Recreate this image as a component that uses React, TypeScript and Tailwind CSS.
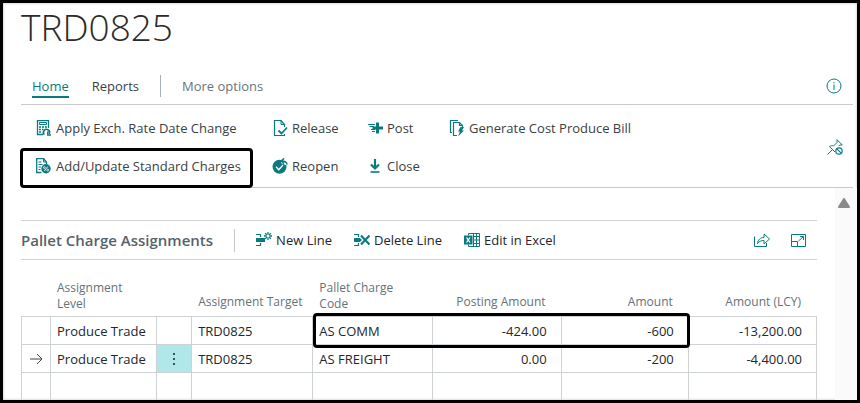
import type { ReactNode } from "react";

const TEAL = "#0b7a80";

function Icon({ children, size = 16 }: { children: ReactNode; size?: number }) {
  return (
    <svg width={size} height={size} viewBox="0 0 16 16" fill="none" stroke={TEAL} strokeWidth="1" className="shrink-0" aria-hidden="true">
      {children}
    </svg>
  );
}

const CalculatorIcon = () => (
  <Icon>
    <path d="M7 14.500H1.500V.5h11V8" strokeWidth="1.300" />
    <path d="M3.500 2.500h7v2h-7z" />
    <path d="M3 7h2M6 7h2M9 7h2M3 9.500h2M6 9.500h1.500M3 12h2" strokeWidth="1.600" />
    <path d="M8.300 14.500A3 3 0 1 1 13 14" strokeWidth="1.600" />
    <path d="M11.700 11.500v3.500h3.300" strokeWidth="1.300" />
  </Icon>
);

const ChargesIcon = () => (
  <Icon>
    <path d="M5.500 14.500H.7V.5H7.500L10.500 4v2" strokeWidth="1.300" />
    <path d="M7.500 .5V4h3M2.500 4H5.500M2.500 6.500h4M2.500 9H5M2.500 11.500h2" />
    <circle cx="10" cy="10.800" r="4.700" fill={TEAL} stroke="none" />
    <path d="m8.300 13 3.400-4.400" stroke="#fff" strokeWidth=".9" />
    <circle cx="8.300" cy="9.500" r=".9" stroke="#fff" strokeWidth=".8" />
    <circle cx="11.700" cy="12.100" r=".9" stroke="#fff" strokeWidth=".8" />
  </Icon>
);

const ReleaseIcon = () => (
  <Icon>
    <path d="M12.500 7V4.500L9 .5H2.500v15h10v-1.500" strokeWidth="1.200" />
    <path d="M9 .5v4h3.500" />
    <path d="m6.500 10.500 3 3 5.500-6" strokeWidth="1.800" />
  </Icon>
);

const ReopenIcon = () => (
  <Icon>
    <circle cx="7.500" cy="8.800" r="7" fill={TEAL} stroke="none" />
    <path d="m4 8.800 2.800 2.900L11 7" stroke="#fff" strokeWidth="1.400" />
    <path d="M9 0h7v7h-2.500L9 5z" fill="#fff" stroke="none" />
    <path d="M15 6.500C15 4 13 3 9.500 3M12 .5 9.300 3 12 5.500" strokeWidth="1.600" />
  </Icon>
);

const PostIcon = () => (
  <Icon>
    <path d="M10.500 2.500v11M5.500 8H16" strokeWidth="3" />
    <path d="M1 4.500h7M2.500 6.500H7M4 9.500h4M5 11.500h3" />
  </Icon>
);

const CloseIcon = () => (
  <Icon>
    <path d="M8 1v9M4 6.500l4 4 4-4" strokeWidth="2.200" />
    <path d="M3.500 14h9" strokeWidth="1.600" />
  </Icon>
);

const GenerateIcon = () => (
  <Icon>
    <path d="M3 12.500H1.500V.5H9" strokeWidth="1.200" />
    <path d="M8 15.500H4.500v-13h6l3 3V7M10.500 2.500v3h3" strokeWidth="1.200" />
    <path d="m11.500 7-2.500 4.500h2L9 16.500l6-6h-2L15 7z" fill={TEAL} stroke="none" />
  </Icon>
);

const NewLineIcon = () => (
  <Icon>
    <path d="M0 2.500h4.500V5M0 13.500h4.500V11" strokeWidth="1.200" />
    <path d="M0 6h9v4H0z" fill={TEAL} stroke="none" />
    <path d="M12 0v2.500M12 5.500V8M8 4h2.500M13.500 4H16M9.200 1.200 11 3M13 5l1.800 1.800M14.800 1.200 13 3M11 5 9.200 6.800" strokeWidth="1.300" />
  </Icon>
);

const DeleteLineIcon = () => (
  <Icon>
    <path d="M0 2.500h4.500V5M0 13.500h4.500V11" strokeWidth="1.200" />
    <path d="M0 6h6l2 2-2 2H0z" fill={TEAL} stroke="none" />
    <path d="m7 3.500 8.500 9M15.500 3.500 7 12.500" strokeWidth="2.200" />
  </Icon>
);

const ExcelIcon = () => (
  <Icon>
    <path d="M4.500 3.500v-2h11v13h-11v-2M9 4.500h6.500M9 8h6.500M9 11.500h6.500M9.500 1.500v13M12.500 1.500v13" />
    <path d="M0 3.500h8.500v9H0z" fill={TEAL} stroke="none" />
    <path d="m2.500 5.500 3.500 5M6 5.500l-3.500 5" stroke="#fff" strokeWidth="1.300" />
  </Icon>
);

const ShareIcon = () => (
  <Icon>
    <path d="M.5 4.500v10h12V11" />
    <path d="M3.500 11.500C4 7.500 6.500 5.500 10 5.500V2l5.500 5-5.500 5V8.500C7 8.500 5 9.500 3.500 11.500z" strokeLinejoin="round" />
  </Icon>
);

const ExpandIcon = () => (
  <Icon>
    <path d="M.5 2.500h14v12H.5zM.5 9.500h6v5" />
    <path d="m7.500 9 5-4.500M9 4.500h3.500V8" />
  </Icon>
);

const InfoIcon = () => (
  <Icon>
    <circle cx="8" cy="8" r="7" />
    <path d="M8 6.500V12M8 4v1.200" />
  </Icon>
);

const UnpinIcon = () => (
  <Icon>
    <path d="M.5 15.500 5 11M8 13 2.500 7.500C4 6.500 5.500 6.500 6.500 7L10 3.500V.7L15.300 6h-2.500l-1 1" strokeLinejoin="round" />
    <circle cx="12" cy="12" r="3.200" strokeWidth="1.200" />
    <path d="m9.800 9.800 4.400 4.400" strokeWidth="1.200" />
  </Icon>
);

type Action = { label: string; icon: ReactNode; marked?: boolean };

const actions: Action[] = [
  { label: "Apply Exch. Rate Date Change", icon: <CalculatorIcon /> },
  { label: "Release", icon: <ReleaseIcon /> },
  { label: "Post", icon: <PostIcon /> },
  { label: "Generate Cost Produce Bill", icon: <GenerateIcon /> },
  { label: "Add/Update Standard Charges", icon: <ChargesIcon />, marked: true },
  { label: "Reopen", icon: <ReopenIcon /> },
  { label: "Close", icon: <CloseIcon /> },
];

const lineActions: Action[] = [
  { label: "New Line", icon: <NewLineIcon /> },
  { label: "Delete Line", icon: <DeleteLineIcon /> },
  { label: "Edit in Excel", icon: <ExcelIcon /> },
];

function ActionButton({ label, icon, marked }: Action) {
  return (
    <button type="button" className="relative flex items-center gap-1 justify-self-start whitespace-nowrap">
      {icon}
      {label}
      {marked && <span className="absolute -top-2 -right-3 -bottom-3 -left-4 rounded-sm border-3 border-black" />}
    </button>
  );
}

type Row = { level: string; target: string; code: string; posting: string; amount: string; lcy: string; current?: boolean; marked?: boolean };

const rows: Row[] = [
  { level: "Produce Trade", target: "TRD0825", code: "AS COMM", posting: "-424.00", amount: "-600", lcy: "-13,200.00", marked: true },
  { level: "Produce Trade", target: "TRD0825", code: "AS FREIGHT", posting: "0.00", amount: "-200", lcy: "-4,400.00", current: true },
  { level: "", target: "", code: "", posting: "", amount: "", lcy: "" },
];

const head = "border-b border-[#cfd2d4] px-[6px] pb-[6px] align-bottom font-normal";
const wrappedHead = "border-b border-[#cfd2d4] px-[6px] pb-1 align-bottom font-normal";
const numHead = "border-b border-[#cfd2d4] pr-4 pb-[6px] text-right align-bottom font-normal";
const cell = "relative border-r border-b border-[#cfd2d4] px-[6px]";
const numCell = "relative border-r border-b border-[#cfd2d4] pr-[14px] text-right";

export default function App() {
  return (
    <div className="flex h-screen flex-col overflow-hidden border-3 border-black bg-white font-['Open_Sans','Noto_Sans',sans-serif] text-[13px] leading-5 text-[#3a3f43] shadow-[inset_0_0_3px_#bbb]">
      <header className="pr-1 pl-[18px]">
        <h1 className="text-[37px] leading-[48px] font-light text-[#2b2b2b]">TRD0825</h1>
        <nav className="mt-[18px] flex h-9 items-center border-b border-[#c8cbcd] pr-[11px] pb-[2px] pl-[11px]">
          <a href="#home" className="-mb-[2px] border-b-2 border-[#0b7a80] text-[#0b7a80]">Home</a>
          <a href="#reports" className="ml-[23px]">Reports</a>
          <span className="mr-[21px] ml-[21px] h-[22px] w-px bg-[#a9b2b9]" />
          <a href="#more" className="text-[#6b747c]">More options</a>
          <button type="button" aria-label="Details" className="ml-auto"><InfoIcon /></button>
        </nav>
        <div className="flex items-center border-b border-[#c8cbcd] pt-1 pr-[10px] pb-[2px] pl-[15px]">
          <div className="grid flex-1 auto-rows-[38px] grid-cols-[236px_95px_82px_auto] items-center">
            {actions.map((a) => <ActionButton key={a.label} {...a} />)}
          </div>
          <button type="button" aria-label="Unpin"><UnpinIcon /></button>
        </div>
      </header>

      <div className="flex min-h-0 flex-1">
        <main className="min-w-0 flex-1 overflow-hidden px-[18px] pt-8">
          <div className="flex h-10 items-center border-y border-[#cfd2d4]">
            <h2 className="text-[15px] font-semibold text-[#56626b]">Pallet Charge Assignments</h2>
            <span className="mx-[21px] h-[23px] w-px bg-[#c4c8cb]" />
            <div className="flex gap-[22px] text-[#22272b]">
              {lineActions.map((a) => <ActionButton key={a.label} {...a} />)}
            </div>
            <div className="ml-auto flex gap-[21px] pr-[10px]">
              <button type="button" aria-label="Share"><ShareIcon /></button>
              <button type="button" aria-label="Expand"><ExpandIcon /></button>
            </div>
          </div>

          <table className="w-full table-fixed border-separate border-spacing-0 text-left text-[#22272b]">
            <colgroup>
              <col className="w-[30px]" />
              <col className="w-[106px]" />
              <col className="w-[35px]" />
              <col className="w-[121px]" />
              <col className="w-[120px]" />
              <col className="w-[128px]" />
              <col className="w-[127px]" />
              <col className="w-[128px]" />
            </colgroup>
            <thead className="text-xs leading-4 text-[#66717a]">
              <tr className="h-[57px]">
                <th className={head} />
                <th className={wrappedHead}>Assignment<br />Level</th>
                <th className={head} />
                <th className={head}>Assignment Target</th>
                <th className={wrappedHead}>Pallet Charge<br />Code</th>
                <th className={numHead}>Posting Amount</th>
                <th className={numHead}>Amount</th>
                <th className={numHead}>Amount (LCY)</th>
              </tr>
            </thead>
            <tbody>
              {rows.map((r, i) => (
                <tr key={i} className="h-7">
                  <td className="border-r border-b border-l border-[#cfd2d4]">
                    {r.current && (
                      <svg width="14" height="12" viewBox="0 0 14 12" fill="none" stroke="#444" className="mx-auto" aria-hidden="true">
                        <path d="M1 6h12M8 1l5 5-5 5" />
                      </svg>
                    )}
                  </td>
                  <td className={cell}>{r.level}</td>
                  <td className={r.current ? "border-r border-b border-[#cfd2d4] bg-[#b0e8ea]" : "border-r border-b border-[#cfd2d4]"}>
                    {r.current && (
                      <button type="button" aria-label="Row options" className="flex w-full flex-col items-center gap-[3px]">
                        <span className="size-[2px] bg-[#33565a]" />
                        <span className="size-[2px] bg-[#33565a]" />
                        <span className="size-[2px] bg-[#33565a]" />
                      </button>
                    )}
                  </td>
                  <td className={cell}>{r.target}</td>
                  <td className={cell}>
                    {r.code}
                    {r.marked && <span className="absolute -inset-y-1 right-0 left-0 z-10 rounded-l-sm border-y-3 border-l-3 border-black" />}
                  </td>
                  <td className={numCell}>
                    {r.posting}
                    {r.marked && <span className="absolute -inset-y-1 -right-px -left-px z-10 border-y-3 border-black" />}
                  </td>
                  <td className={numCell}>
                    {r.amount}
                    {r.marked && <span className="absolute -inset-y-1 -right-[2px] left-0 z-10 rounded-r-sm border-y-3 border-r-3 border-black" />}
                  </td>
                  <td className={numCell}>{r.lcy}</td>
                </tr>
              ))}
            </tbody>
          </table>
        </main>
        <div className="flex w-[22px] justify-center bg-[#fafafa] pt-[10px] pr-1">
          <svg width="12" height="10" viewBox="0 0 12 10" aria-hidden="true">
            <path d="M6 1 11 9H1z" fill="#8a8a8a" stroke="#8a8a8a" strokeWidth="2" strokeLinejoin="round" />
          </svg>
        </div>
      </div>
    </div>
  );
}
